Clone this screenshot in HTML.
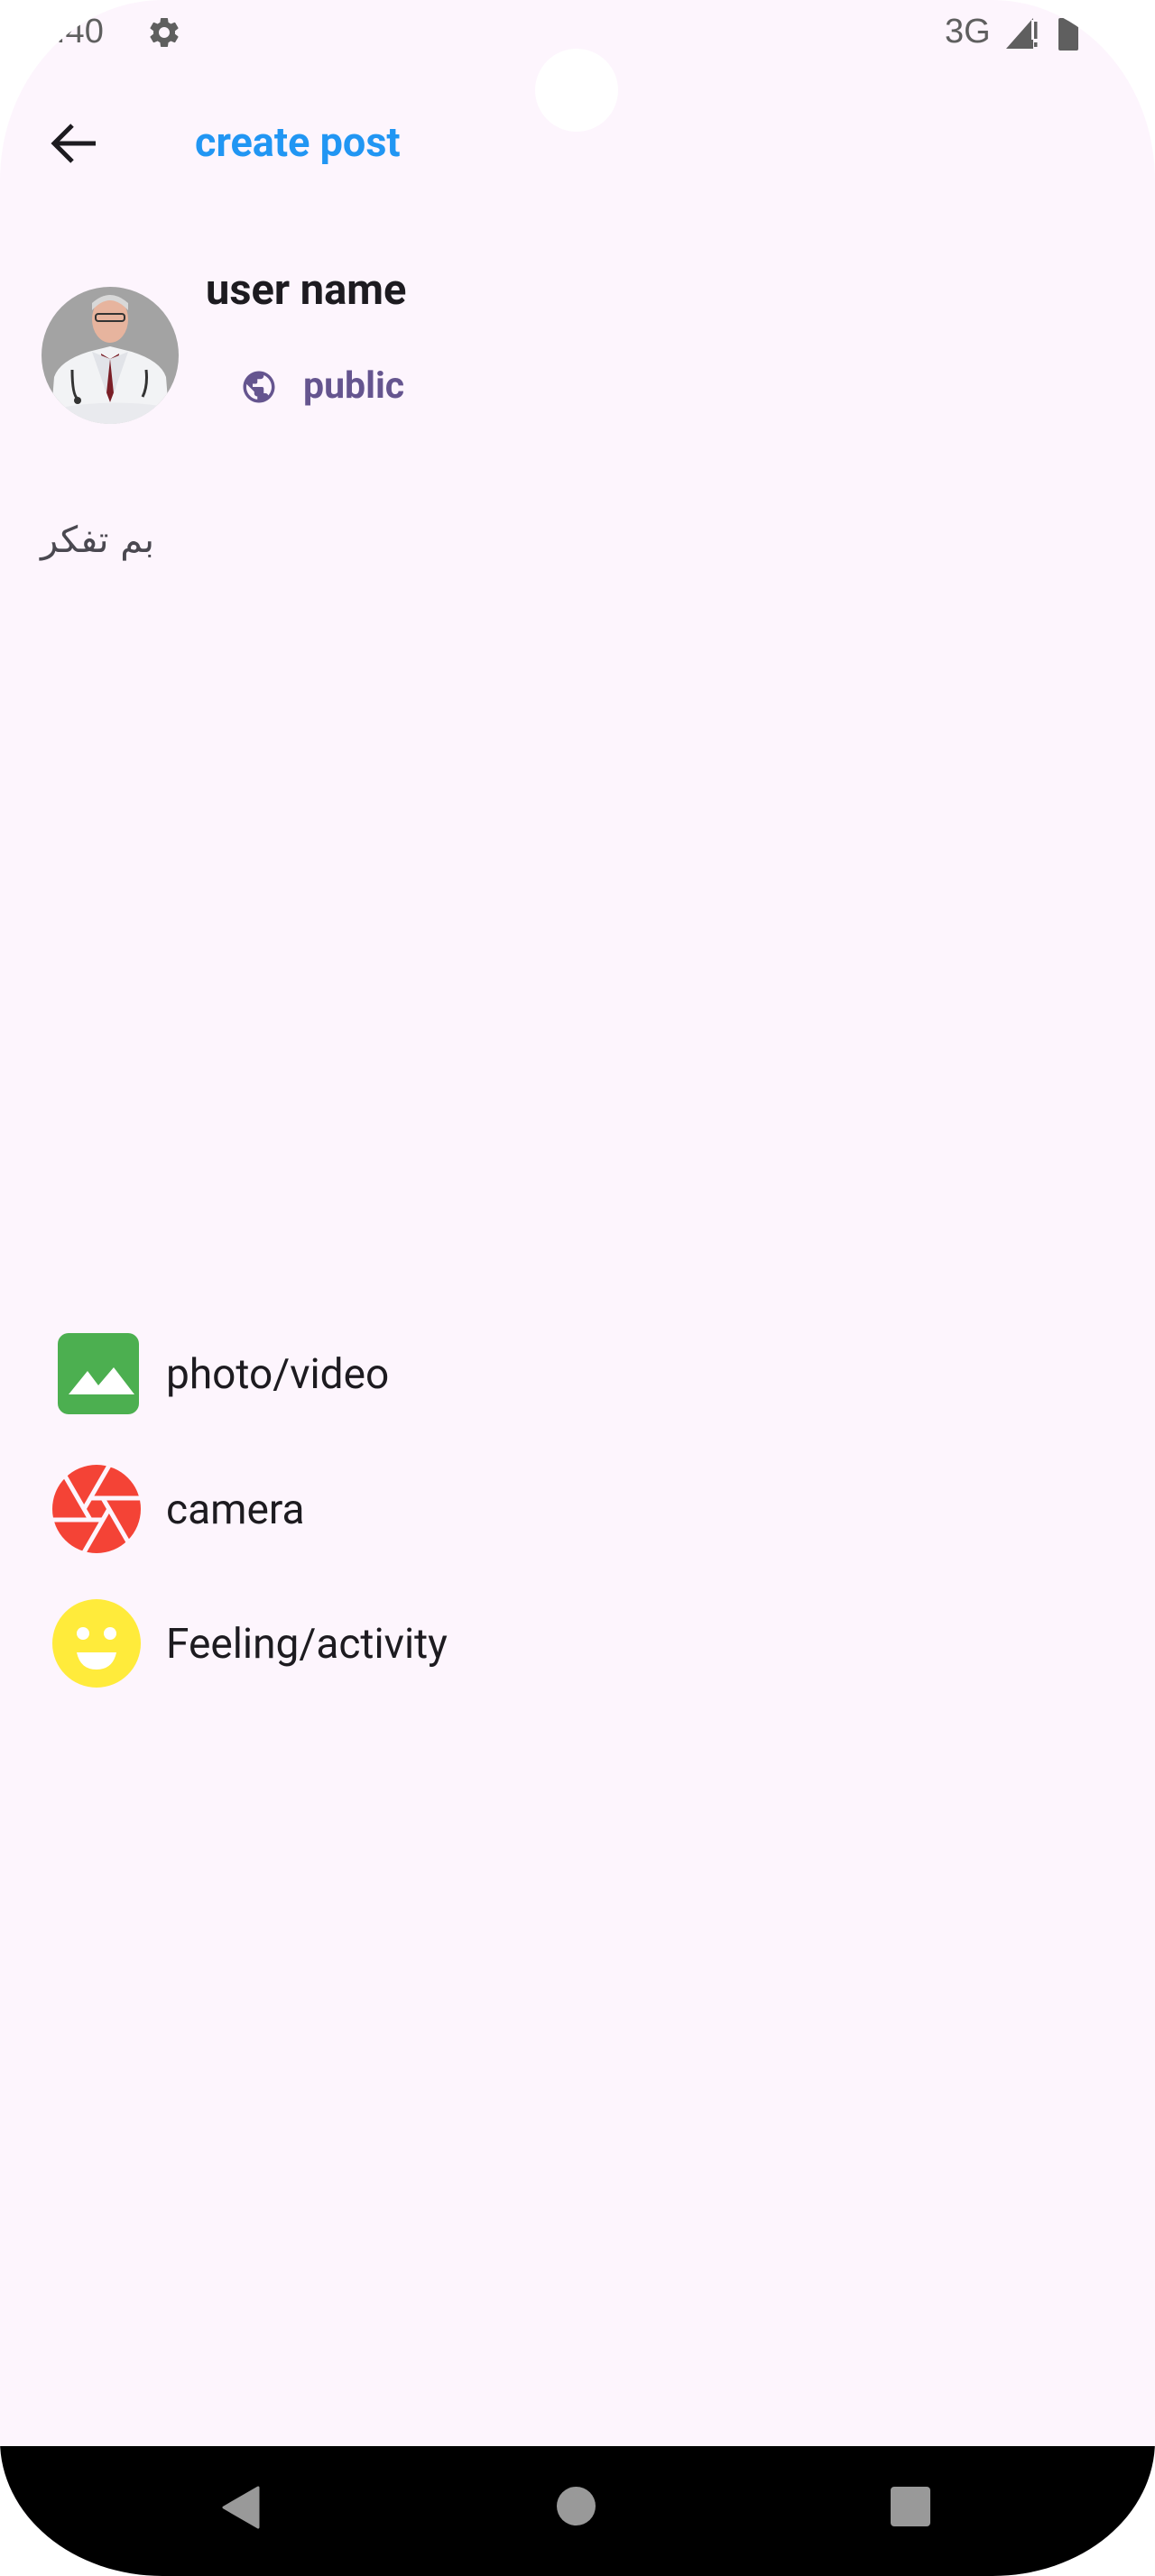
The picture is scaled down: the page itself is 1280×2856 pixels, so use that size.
<!DOCTYPE html>
<html><head><meta charset="utf-8"><style>
html,body{margin:0;padding:0;background:#fff;}
body{width:1280px;height:2856px;position:relative;overflow:hidden;font-family:"Roboto","Liberation Sans",sans-serif;}
.screen{position:absolute;left:0;top:0;width:1280px;height:2856px;background:#fdf5fd;border-radius:180px 180px 180px 180px/200px 200px 150px 150px;overflow:hidden;}
.nav{position:absolute;left:0;top:2712px;width:1280px;height:144px;background:#000;}
.t{position:absolute;white-space:nowrap;}
</style></head><body>
<div class="screen">
  <div style="position:absolute;left:56px;top:44px;width:3px;height:8px;background:#5f5f5f;"></div>
  <div class="t" style="left:62px;top:14px;font-size:38px;color:#5f5f5f;font-family:'Liberation Sans',sans-serif;">:40</div>
  <svg style="position:absolute;left:162px;top:16px" width="40" height="40" viewBox="0 0 24 24"><path fill="#5f5f5f" d="M19.14 12.94c.04-.3.06-.61.06-.94 0-.32-.02-.64-.07-.94l2.03-1.58a.49.49 0 0 0 .12-.61l-1.920-3.32a.488.488 0 0 0-.59-.22l-2.39.96c-.5-.38-1.030-.7-1.62-.94l-.36-2.54a.484.484 0 0 0-.48-.41h-3.84c-.24 0-.43.17-.47.41l-.36 2.54c-.59.24-1.13.57-1.62.94l-2.39-.96c-.22-.08-.47 0-.59.22L2.74 8.87c-.12.21-.08.47.12.61l2.03 1.58c-.05.3-.09.63-.09.94s.02.64.07.94l-2.03 1.58a.49.49 0 0 0-.12.61l1.92 3.32c.12.22.37.29.59.22l2.39-.96c.5.38 1.03.7 1.62.94l.36 2.54c.05.24.24.41.48.41h3.84c.24 0 .44-.17.47-.41l.36-2.54c.59-.24 1.13-.56 1.62-.94l2.39.96c.22.08.47 0 .59-.22l1.92-3.32c.12-.22.07-.47-.12-.61l-2.010-1.58zM12 15.6c-1.98 0-3.6-1.62-3.6-3.6s1.62-3.6 3.6-3.6 3.6 1.62 3.6 3.6-1.62 3.6-3.6 3.6z"/></svg>
  <div class="t" style="left:1047px;top:14px;font-size:38px;color:#5f5f5f;font-family:'Liberation Sans',sans-serif;">3G</div>
  <svg style="position:absolute;left:1113px;top:16px" width="40" height="40" viewBox="0 0 40 40"><path fill="#5f5f5f" d="M2 38 L32 4 L32 38 Z"/><rect x="30" y="6" width="5" height="22" fill="#fdf5fd"/><rect x="33" y="8" width="3.5" height="19" fill="#5f5f5f"/><rect x="33" y="31" width="3.5" height="5" fill="#5f5f5f"/></svg>
  <svg style="position:absolute;left:1173px;top:16px" width="22" height="40" viewBox="0 0 22 40"><path fill="#5f5f5f" d="M6 0h10v4h4a2 2 0 0 1 2 2v32a2 2 0 0 1-2 2H2a2 2 0 0 1-2-2V6a2 2 0 0 1 2-2h4z"/></svg>
  <div style="position:absolute;left:593px;top:54px;width:92px;height:92px;border-radius:50%;background:#fff;"></div>

  <svg style="position:absolute;left:56px;top:136px" width="52" height="46" viewBox="0 0 52 46"><path d="M50 23H6M24 3L4 23l20 20" fill="none" stroke="#1d1b20" stroke-width="5"/></svg>
  <div class="t" style="left:216px;top:131px;font-size:45px;font-weight:bold;color:#2196f3;">create post</div>

  <svg style="position:absolute;left:46px;top:318px" width="152" height="152" viewBox="0 0 152 152">
    <defs><clipPath id="c"><circle cx="76" cy="76" r="76"/></clipPath></defs>
    <g clip-path="url(#c)">
      <rect width="152" height="152" fill="#a3a3a3"/>
      <path d="M10 152 L14 100 Q20 82 52 72 L76 66 L100 72 Q132 82 138 100 L142 152Z" fill="#f2f3f5"/>
      <path d="M66 74 L76 80 L86 74 L82 112 L76 128 L70 112Z" fill="#7a1e26"/>
      <path d="M56 72 L72 118 L76 80Z M96 72 L80 118 L76 80Z" fill="#e1e3e8"/>
      <ellipse cx="76" cy="36" rx="20" ry="26" fill="#e7b49e"/>
      <path d="M56 26 Q76 4 96 26 L96 18 Q76 0 56 18Z" fill="#d8d8d8"/>
      <rect x="60" y="30" width="32" height="8" rx="3" fill="none" stroke="#333" stroke-width="2"/>
      <path d="M34 92 Q34 120 40 124 M116 92 Q118 110 112 122" fill="none" stroke="#333" stroke-width="3"/>
      <circle cx="40" cy="126" r="4" fill="#333"/>
      <path d="M20 134 Q76 124 132 132 L134 152 L18 152Z" fill="#e9eaee"/>
    </g>
  </svg>
  <div class="t" style="left:228px;top:294px;font-size:47px;font-weight:bold;color:#1d1b20;">user name</div>
  <svg style="position:absolute;left:266px;top:408px" width="42" height="42" viewBox="0 0 24 24"><path fill="#65558f" d="M12 2C6.48 2 2 6.48 2 12s4.48 10 10 10 10-4.48 10-10S17.520 2 12 2zm-1 17.93c-3.95-.49-7-3.85-7-7.93 0-.62.08-1.21.21-1.79L9 15v1c0 1.1.9 2 2 2v1.93zm6.9-2.54c-.26-.81-1-1.39-1.9-1.39h-1v-3c0-.55-.45-1-1-1H8v-2h2c.55 0 1-.45 1-1V7h2c1.1 0 2-.9 2-2v-.41c2.93 1.19 5 4.06 5 7.41 0 2.08-.8 3.97-2.1 5.39z"/></svg>
  <div class="t" style="left:336px;top:404px;font-size:41px;font-weight:bold;color:#65558f;">public</div>

  <div class="t" style="left:45px;top:576px;font-size:40px;color:#4a4850;font-family:'DejaVu Sans',sans-serif;direction:rtl;">بم تفكر</div>

  <svg style="position:absolute;left:64px;top:1478px" width="90" height="90" viewBox="0 0 90 90"><rect width="90" height="90" rx="12" fill="#4caf50"/><path d="M12 68 L33 42 L45 58 L62 38 L85 68Z" fill="#fff"/></svg>
  <div class="t" style="left:184px;top:1497px;font-size:46px;color:#1d1b20;">photo/video</div>

  <svg style="position:absolute;left:58px;top:1624px" width="98" height="98" viewBox="-49 -49 98 98">
    <circle r="49" fill="#f44336"/>
    <g stroke="#fdf5fd" stroke-width="5">
      <line x1="-8" y1="-12" x2="60" y2="-12" transform="rotate(0)"/>
      <line x1="-8" y1="-12" x2="60" y2="-12" transform="rotate(60)"/>
      <line x1="-8" y1="-12" x2="60" y2="-12" transform="rotate(120)"/>
      <line x1="-8" y1="-12" x2="60" y2="-12" transform="rotate(180)"/>
      <line x1="-8" y1="-12" x2="60" y2="-12" transform="rotate(240)"/>
      <line x1="-8" y1="-12" x2="60" y2="-12" transform="rotate(300)"/>
    </g>
  </svg>
  <div class="t" style="left:184px;top:1647px;font-size:46px;color:#1d1b20;">camera</div>

  <svg style="position:absolute;left:58px;top:1773px" width="98" height="98" viewBox="0 0 98 98"><circle cx="49" cy="49" r="49" fill="#ffeb3b"/><circle cx="34" cy="38" r="7" fill="#fff"/><circle cx="64" cy="38" r="7" fill="#fff"/><path d="M27 59 H71 Q67 78 49 78 Q31 78 27 59Z" fill="#fff"/></svg>
  <div class="t" style="left:184px;top:1796px;font-size:46px;color:#1d1b20;">Feeling/activity</div>

  <div class="nav">
    <svg style="position:absolute;left:244px;top:44px" width="46" height="48" viewBox="0 0 46 48"><path d="M42 2 L4 24 L42 46Z" fill="#999" stroke="#999" stroke-width="3" stroke-linejoin="round"/></svg>
    <div style="position:absolute;left:617px;top:45px;width:43px;height:43px;border-radius:50%;background:#999;"></div>
    <div style="position:absolute;left:987px;top:45px;width:44px;height:44px;border-radius:4px;background:#999;"></div>
  </div>
</div>
</body></html>
